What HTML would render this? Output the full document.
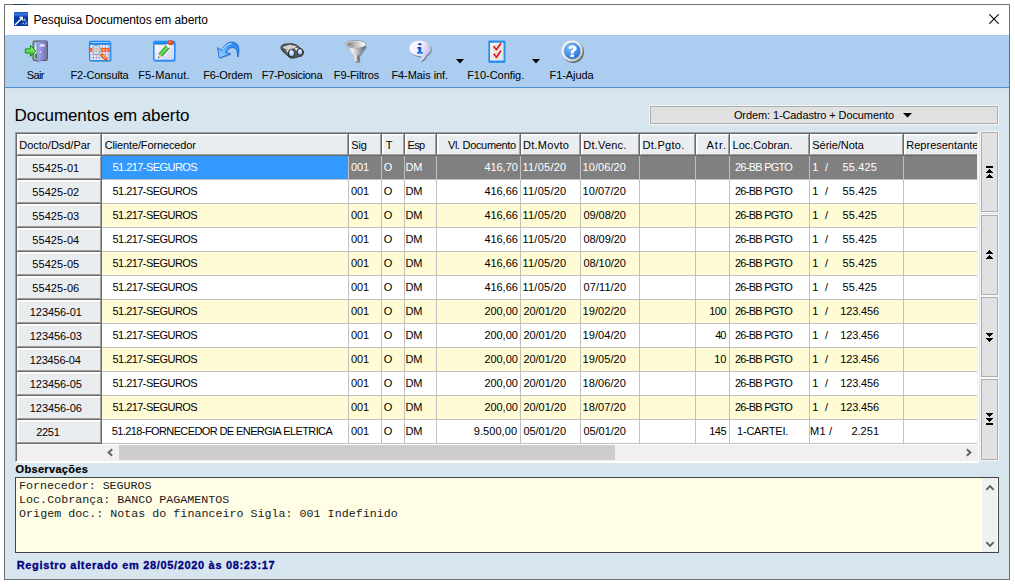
<!DOCTYPE html>
<html><head><meta charset="utf-8"><style>
html,body{margin:0;padding:0;background:#fff;width:1015px;height:585px;overflow:hidden;}
body div{position:absolute;box-sizing:border-box;white-space:pre;}
</style></head><body>
<div style="left:4px;top:4px;width:1006px;height:576px;border:1px solid #6f6f6f;background:#d6e5ee;"></div>
<div style="left:13px;top:4px;width:15px;height:1px;background:#1f3f6f;"></div>
<div style="left:5px;top:5px;width:1004px;height:30px;background:#fff;"></div>
<svg style="position:absolute;left:14px;top:12px" width="14" height="14" viewBox="0 0 14 14">
<defs><linearGradient id="gti" x1="0" y1="0" x2="0" y2="1"><stop offset="0" stop-color="#1a58c8"/><stop offset="0.2" stop-color="#3a78e0"/><stop offset="0.35" stop-color="#0a3aa8"/><stop offset="1" stop-color="#0838a0"/></linearGradient></defs>
<rect x="0" y="0" width="14" height="14" fill="url(#gti)"/>
<path d="M1 13 L7.5 6.5" stroke="#fff" stroke-width="1.5"/><path d="M4.8 4.8 L9 4.8 L9 9 Z" fill="#fff"/>
<path d="M9.5 9 L11 6.5 M8.5 12 L10 11 M11 12.5 L13 10.5 M10.5 8.5 l1.5 0.5" stroke="#9ec0f0" stroke-width="1.1"/>
</svg>
<div style="left:33.40px;top:10px;font:normal 12px 'Liberation Sans', sans-serif;line-height:20px;color:#000;letter-spacing:-0.100px;">Pesquisa Documentos em aberto</div>
<svg style="position:absolute;left:989px;top:14px" width="10" height="10" viewBox="0 0 10 10">
<path d="M0.3 0.3 L9.7 9.7 M9.7 0.3 L0.3 9.7" stroke="#000" stroke-width="1.05"/></svg>
<div style="left:5px;top:35px;width:1004px;height:52px;background:#abcdf0;"></div>
<div style="left:5px;top:35px;width:1004px;height:1px;background:#a5c7ec;"></div>
<div style="left:5px;top:87px;width:1004px;height:1px;background:#4f8fd0;"></div>
<div style="left:5px;top:88px;width:1004px;height:1px;background:#cfe1ee;"></div>
<div style="left:26.70px;top:65px;font:normal 11px 'Liberation Sans', sans-serif;line-height:20px;color:#000;letter-spacing:-0.633px;">Sair</div>
<div style="left:70.40px;top:65px;font:normal 11px 'Liberation Sans', sans-serif;line-height:20px;color:#000;letter-spacing:-0.160px;">F2-Consulta</div>
<div style="left:138.20px;top:65px;font:normal 11px 'Liberation Sans', sans-serif;line-height:20px;color:#000;letter-spacing:0.150px;">F5-Manut.</div>
<div style="left:203.20px;top:65px;font:normal 11px 'Liberation Sans', sans-serif;line-height:20px;color:#000;letter-spacing:-0.143px;">F6-Ordem</div>
<div style="left:261.80px;top:65px;font:normal 11px 'Liberation Sans', sans-serif;line-height:20px;color:#000;letter-spacing:-0.318px;">F7-Posiciona</div>
<div style="left:333.80px;top:65px;font:normal 11px 'Liberation Sans', sans-serif;line-height:20px;color:#000;letter-spacing:-0.100px;">F9-Filtros</div>
<div style="left:391.40px;top:65px;font:normal 11px 'Liberation Sans', sans-serif;line-height:20px;color:#000;letter-spacing:-0.064px;">F4-Mais inf.</div>
<div style="left:467.20px;top:65px;font:normal 11px 'Liberation Sans', sans-serif;line-height:20px;color:#000;letter-spacing:-0.040px;">F10-Config.</div>
<div style="left:549.50px;top:65px;font:normal 11px 'Liberation Sans', sans-serif;line-height:20px;color:#000;letter-spacing:-0.071px;">F1-Ajuda</div>
<svg style="position:absolute;left:456px;top:59px" width="8" height="5" viewBox="0 0 8 5"><path d="M0 0 L8 0 L4 4.5Z" fill="#000"/></svg>
<svg style="position:absolute;left:532px;top:59px" width="8" height="5" viewBox="0 0 8 5"><path d="M0 0 L8 0 L4 4.5Z" fill="#000"/></svg>
<svg style="position:absolute;left:24px;top:38px" width="26" height="26" viewBox="0 0 26 26">
 <defs>
  <linearGradient id="gdoor" x1="0" y1="0" x2="1" y2="0"><stop offset="0" stop-color="#a4a8ec"/><stop offset="1" stop-color="#7478c0"/></linearGradient>
  <linearGradient id="garr" x1="0" y1="0" x2="0" y2="1"><stop offset="0" stop-color="#a8f890"/><stop offset="1" stop-color="#38c028"/></linearGradient>
  <linearGradient id="gopen" x1="0" y1="0" x2="0" y2="1"><stop offset="0" stop-color="#8ad8f8"/><stop offset="0.5" stop-color="#ffffff"/><stop offset="1" stop-color="#c8f0c8"/></linearGradient>
 </defs>
 <rect x="9" y="3" width="14.5" height="19.5" rx="1.2" fill="#8a8a8a" stroke="#5a5a5a" stroke-width="1"/>
 <rect x="10.5" y="4.3" width="3" height="17" fill="url(#gopen)"/>
 <rect x="11" y="15.5" width="2.5" height="5" fill="#18a818"/>
 <path d="M12.9 3.6 L22.2 2.8 L22.2 20.9 L12.9 24 Z" fill="url(#gdoor)" stroke="#6468b0" stroke-width="0.6"/>
 <rect x="15.8" y="6.2" width="4.9" height="2.5" fill="#e4e4ff"/>
 <circle cx="16.4" cy="14.2" r="0.9" fill="#e8e8e8"/>
 <path d="M1.4 10.9 L6.4 10.9 L6.4 7.4 L11.9 12.9 L6.4 18.4 L6.4 15 L1.4 15 Z" fill="url(#garr)" stroke="#109010" stroke-width="1" stroke-linejoin="round"/>
</svg>
<svg style="position:absolute;left:86px;top:38px" width="28" height="26" viewBox="0 0 28 26">
 <rect x="4.2" y="4" width="21.3" height="19.8" rx="1.5" fill="#2a4a70" fill-opacity="0.45"/>
 <rect x="3.6" y="3.4" width="20.6" height="19.2" rx="1.2" fill="#f4f2ff" stroke="#1a8cf8" stroke-width="1.3"/>
 <rect x="4" y="3.8" width="19.8" height="3" fill="#0a78e8"/>
 <rect x="4.5" y="4.2" width="18.8" height="0.9" fill="#c0e4ff"/>
 <rect x="6.8" y="7" width="1" height="15.2" fill="#b0acd0"/>
 <rect x="9.9" y="7" width="1" height="15.2" fill="#b0acd0"/>
 <rect x="12.8" y="7" width="1" height="15.2" fill="#b0acd0"/>
 <rect x="15.899999999999999" y="7" width="1" height="15.2" fill="#b0acd0"/>
 <rect x="18.8" y="7" width="1" height="15.2" fill="#b0acd0"/>
 <rect x="21.7" y="7" width="1" height="15.2" fill="#b0acd0"/>
 <rect x="4" y="9.7" width="19.8" height="1" fill="#b0acd0"/>
 <rect x="4" y="13.1" width="19.8" height="1" fill="#b0acd0"/>
 <rect x="4" y="16.2" width="19.8" height="1" fill="#b0acd0"/>
 <rect x="4" y="19.1" width="19.8" height="1" fill="#b0acd0"/>
 <rect x="4" y="10" width="19.8" height="3.8" fill="#ff5a20"/>
 <rect x="8.05" y="11.1" width="1.6" height="1.6" fill="#ffd0a8"/>
 <rect x="11.05" y="11.1" width="1.6" height="1.6" fill="#ffd0a8"/>
 <rect x="14.05" y="11.1" width="1.6" height="1.6" fill="#ffd0a8"/>
 <rect x="17.05" y="11.1" width="1.6" height="1.6" fill="#ffd0a8"/>
 <rect x="19.95" y="11.1" width="1.6" height="1.6" fill="#ffd0a8"/>
 <circle cx="10.4" cy="12" r="4.6" fill="#bfe6fa" fill-opacity="0.7" stroke="#9a9aa8" stroke-width="1"/>
 <path d="M15.8 17 L19.8 20.8" stroke="#e85010" stroke-width="3.2" stroke-linecap="round"/>
 <path d="M16.1 17 L19.6 20.3" stroke="#ffd040" stroke-width="1.1"/>
</svg>
<svg style="position:absolute;left:152px;top:38px" width="26" height="26" viewBox="0 0 26 26">
 <defs><linearGradient id="gwin" x1="0" y1="0" x2="1" y2="1"><stop offset="0" stop-color="#ffffff"/><stop offset="1" stop-color="#d4d0f4"/></linearGradient></defs>
 <rect x="2.5" y="22.5" width="21" height="1.3" fill="#3a5a7a" fill-opacity="0.35"/>
 <rect x="1.8" y="3.6" width="21" height="19" rx="1.5" fill="url(#gwin)" stroke="#1e90ff" stroke-width="1.6"/>
 <rect x="2.5" y="4.3" width="19.5" height="2.3" fill="#0b7ee8"/>
 <rect x="2.5" y="6.6" width="19.5" height="0.8" fill="#f0c8a0" fill-opacity="0.6"/>
 <path d="M8.2 17.2 L16.2 8.2" stroke="#1a8a1a" stroke-width="4.6"/>
 <path d="M8.2 17.2 L16.2 8.2" stroke="#6ee05a" stroke-width="2.6"/>
 <path d="M15.5 8.8 L17.3 6.8" stroke="#ffffff" stroke-width="4"/>
 <circle cx="18.4" cy="4.6" r="2.7" fill="#e04a20"/>
 <circle cx="18" cy="4" r="1" fill="#ff8a60"/>
 <path d="M6.2 19.5 L7 15.8 L9.5 18.1 Z" fill="#d8c8a8"/>
 <path d="M6 20.3 L6.4 18.6 L7.6 19.6 Z" fill="#303030"/>
</svg>
<svg style="position:absolute;left:214px;top:38px" width="28" height="24" viewBox="0 0 28 24">
 <defs><linearGradient id="gar" x1="0" y1="1" x2="1" y2="0"><stop offset="0" stop-color="#a8d8ff"/><stop offset="0.5" stop-color="#5aaaf8"/><stop offset="1" stop-color="#1a7af0"/></linearGradient></defs>
 <path d="M6.3 21.1 L4.5 10.6 L8.4 13.3 C10 10 14 5.1 19 5.1 C23 5.1 25.5 8 25.5 12 C25.5 15 25.2 18 24.8 20 C24.2 17 24.5 14 23 12 C21.5 10 19 9.8 17 10.5 C15 11.2 13.5 13 12.9 15.6 L17.6 16.8 Z" fill="#1a3a70" fill-opacity="0.35"/>
 <path d="M5.3 20.1 L3.5 9.6 L7.4 12.3 C9 9 13 4.1 18 4.1 C22 4.1 24.5 7 24.5 11 C24.5 14 24.2 17 23.8 19 C23.2 16 23.5 13 22 11 C20.5 9 18 8.8 16 9.5 C14 10.2 12.5 12 11.9 14.6 L16.6 15.8 Z" fill="url(#gar)" stroke="#1468d8" stroke-width="0.9" stroke-linejoin="round"/>
 <path d="M8.5 11.5 C10.5 8.5 13.5 5.8 17.5 5.5" stroke="#d8f0ff" stroke-width="1" fill="none"/>
</svg>
<svg style="position:absolute;left:278px;top:40px" width="28" height="22" viewBox="0 0 28 22">
 <defs><radialGradient id="glens" cx="0.45" cy="0.35" r="0.7"><stop offset="0" stop-color="#f4fbff"/><stop offset="1" stop-color="#6aaaf0"/></radialGradient>
 <linearGradient id="gbar" x1="0" y1="0" x2="0" y2="1"><stop offset="0" stop-color="#ffffff"/><stop offset="1" stop-color="#909090"/></linearGradient></defs>
 <path d="M3 7.5 C3 5 6 4 9 4 L13 3.8 C16 3.8 19 5 21 7 L25.5 11 C25.8 14 24.5 16.5 21.5 16.5 L16 18 C14 18.5 12 18 11 17 L4 10.5 C3.2 9.5 3 8.5 3 7.5 Z" fill="#5a5a5a" stroke="#2a2a2a" stroke-width="0.9"/>
 <path d="M4.5 7 L11.5 4.8 L19 6.3 L16.5 8.3 L8 9.5 Z" fill="#d4d4d4"/>
 <path d="M8 10 L13.5 8.8 L16.5 12 L11.5 16 Z" fill="url(#gbar)"/>
 <path d="M16.5 8.2 L21 7.8 L23.5 10 L19.5 13 Z" fill="url(#gbar)"/>
 <ellipse cx="13.4" cy="13.2" rx="3.4" ry="4" fill="#262626"/>
 <ellipse cx="13.6" cy="13.2" rx="2.5" ry="3.1" fill="url(#glens)"/>
 <ellipse cx="21.8" cy="11.8" rx="3.1" ry="3.7" fill="#262626"/>
 <ellipse cx="22" cy="11.8" rx="2.3" ry="2.9" fill="url(#glens)"/>
</svg>
<svg style="position:absolute;left:342px;top:36px" width="30" height="30" viewBox="0 0 30 30">
 <defs><linearGradient id="gcone" x1="0" y1="0" x2="1" y2="0"><stop offset="0" stop-color="#b8b8b8"/><stop offset="0.3" stop-color="#f4f4f4"/><stop offset="0.7" stop-color="#a0a0a0"/><stop offset="1" stop-color="#505050"/></linearGradient>
 <linearGradient id="gint" x1="0" y1="0" x2="1" y2="0"><stop offset="0" stop-color="#7a7a7a"/><stop offset="0.55" stop-color="#c8c8c8"/><stop offset="1" stop-color="#ffffff"/></linearGradient></defs>
 <path d="M5.3 10.4 L13.2 20.7 L13 26.8 L18.1 26.8 L18.1 20.7 L25.3 11 Z" fill="#3a4a5a" fill-opacity="0.45"/>
 <path d="M4.1 9.2 L12 19.5 L16.9 19.5 L24.1 9.8 Z" fill="url(#gcone)"/>
 <rect x="11.8" y="18.8" width="5.1" height="6.8" rx="1.2" fill="url(#gcone)"/>
 <ellipse cx="13.7" cy="8.2" rx="10.4" ry="3.8" fill="#ececec" stroke="#7a7a7a" stroke-width="0.6"/>
 <ellipse cx="14" cy="8.3" rx="9.2" ry="3" fill="url(#gint)"/>
</svg>
<svg style="position:absolute;left:406px;top:38px" width="28" height="26" viewBox="0 0 28 26">
 <defs><linearGradient id="gbub" x1="0" y1="0" x2="1" y2="0.3"><stop offset="0" stop-color="#ffffff"/><stop offset="0.6" stop-color="#f0eeff"/><stop offset="1" stop-color="#c8c4f0"/></linearGradient>
 <linearGradient id="gi" x1="0" y1="0" x2="0" y2="1"><stop offset="0" stop-color="#0a48b8"/><stop offset="1" stop-color="#1a8af8"/></linearGradient></defs>
 <path d="M14.7 3.6 C21.2 3.6 25.7 7.2 25.7 11.7 C25.7 14.7 23.7 17.2 21.2 18.2 C20.7 20.7 18.2 23.2 14.5 24.7 C16.2 22.7 17 20.7 16.7 19.2 C9.2 19.2 4.5 16 4.5 11.4 C4.5 7 8.7 3.6 14.7 3.6 Z" fill="#3a4058" fill-opacity="0.55"/>
 <path d="M13.5 2.4 C20 2.4 24.5 6 24.5 10.5 C24.5 13.5 22.5 16 20 17 C19.5 19.5 17 22 13.3 23.5 C15 21.5 15.8 19.5 15.5 18 C8 18 3.3 14.8 3.3 10.2 C3.3 5.8 7.5 2.4 13.5 2.4 Z" fill="url(#gbub)" stroke="#d0cce8" stroke-width="0.6"/>
 <ellipse cx="13.9" cy="6.3" rx="1.9" ry="1" fill="#0a40a8"/>
 <path d="M11.3 8.9 L15.3 8.9 L15.3 14 L16.9 14 L16.9 15.8 L10.9 15.8 L10.9 14 L12.4 14 L12.4 10.6 L11.3 10.6 Z" fill="url(#gi)"/>
</svg>
<svg style="position:absolute;left:484px;top:38px" width="26" height="28" viewBox="0 0 26 28">
 <defs><linearGradient id="gpap" x1="0" y1="0" x2="1" y2="0"><stop offset="0" stop-color="#e8e4dc"/><stop offset="0.3" stop-color="#ffffff"/><stop offset="1" stop-color="#e4e0d8"/></linearGradient></defs>
 <rect x="4.9" y="3" width="16.5" height="22" rx="1.2" fill="#0a64c8" fill-opacity="0.5"/>
 <rect x="4.3" y="2.4" width="16.9" height="22.4" rx="1.2" fill="#2a90ec"/>
 <rect x="6" y="4.8" width="13.6" height="17.7" fill="url(#gpap)"/>
 <rect x="9.2" y="7.4" width="5.8" height="5.4" rx="1.6" fill="none" stroke="#c4c4c4" stroke-width="0.9"/>
 <rect x="9.2" y="15.2" width="5.8" height="5.4" rx="1.6" fill="none" stroke="#c4c4c4" stroke-width="0.9"/>
 <path d="M9.6 8.2 L12.4 11.6 L16.9 5.2" fill="none" stroke="#e01818" stroke-width="1.7" stroke-linejoin="round"/>
 <path d="M9.8 15.8 L12.4 19.2 L16.9 12.8" fill="none" stroke="#e01818" stroke-width="1.7" stroke-linejoin="round"/>
</svg>
<svg style="position:absolute;left:558px;top:38px" width="28" height="27" viewBox="0 0 28 27">
 <defs><radialGradient id="ghelp" cx="0.35" cy="0.3" r="0.8"><stop offset="0" stop-color="#7cc0ff"/><stop offset="1" stop-color="#1a6ad8"/></radialGradient>
 <linearGradient id="gring" x1="0" y1="0" x2="1" y2="1"><stop offset="0" stop-color="#ffffff"/><stop offset="0.6" stop-color="#f0ece4"/><stop offset="1" stop-color="#b0a898"/></linearGradient></defs>
 <circle cx="15.2" cy="14.1" r="10.8" fill="#2a2a2a" fill-opacity="0.6"/>
 <circle cx="14.2" cy="13" r="10.6" fill="url(#gring)"/>
 <circle cx="14.2" cy="13" r="8.4" fill="url(#ghelp)" stroke="#c8c0b0" stroke-width="0.5"/>
 <path d="M10.4 10.6 C10.4 8.4 12.2 7.3 14.6 7.3 C17 7.3 18.7 8.6 18.7 10.5 C18.7 12.5 16.5 13 15.8 14.3 L15.8 15.6 L12.8 15.6 L12.8 14 C12.8 11.9 15.4 11.6 15.4 10.5 C15.4 9.9 15 9.6 14.5 9.6 C13.9 9.6 13.6 10.1 13.6 10.9 Z" fill="#fff"/>
 <rect x="12.4" y="16.6" width="3.6" height="2.5" fill="#fff"/>
</svg>

<div style="left:14.60px;top:106px;font:normal 17px 'Liberation Sans', sans-serif;line-height:20px;color:#000;letter-spacing:-0.095px;">Documentos em aberto</div>
<div style="left:649px;top:105px;width:350px;height:20px;background:#f3f6f8;"></div>
<div style="left:650px;top:106px;width:348px;height:18px;border:1px solid #adadad;background:#e1e1e1;"></div>
<div style="left:733.90px;top:105px;font:normal 11px 'Liberation Sans', sans-serif;line-height:20px;color:#000;letter-spacing:-0.100px;">Ordem: 1-Cadastro + Documento</div>
<svg style="position:absolute;left:903px;top:113px" width="9" height="5" viewBox="0 0 9 5"><path d="M0 0 L9 0 L4.5 4.5Z" fill="#000"/></svg>
<div style="left:15px;top:132px;width:964px;height:331px;background:#fff;"></div>
<div style="left:15px;top:132px;width:964px;height:1px;background:#a0a0a0;"></div>
<div style="left:15px;top:132px;width:1px;height:331px;background:#a0a0a0;"></div>
<div style="left:16px;top:133px;width:962px;height:1px;background:#696969;"></div>
<div style="left:16px;top:133px;width:1px;height:329px;background:#696969;"></div>
<div style="left:15px;top:462px;width:964px;height:1px;background:#fff;"></div>
<div style="left:978px;top:132px;width:1px;height:331px;background:#fff;"></div>
<div style="left:16px;top:461px;width:962px;height:1px;background:#fcfcfc;"></div>
<div style="left:977px;top:133px;width:1px;height:329px;background:#f0f0f0;"></div>
<div style="left:17px;top:134px;width:960px;height:310px;overflow:hidden;">
<div style="left:0px;top:0px;width:84px;height:21px;background:#eaedf0;border-top:1px solid #fff;border-left:1px solid #fff;border-bottom:1px solid #a0a0a0;border-right:1px solid #a0a0a0;box-shadow:inset 1px 1px #f6f7f8;"></div>
<div style="left:84px;top:0px;width:1px;height:22px;background:#696969;"></div>
<div style="left:85px;top:0px;width:246px;height:21px;background:#eaedf0;border-top:1px solid #fff;border-left:1px solid #fff;border-bottom:1px solid #a0a0a0;border-right:1px solid #a0a0a0;box-shadow:inset 1px 1px #f6f7f8;"></div>
<div style="left:331px;top:0px;width:1px;height:22px;background:#696969;"></div>
<div style="left:332px;top:0px;width:32px;height:21px;background:#eaedf0;border-top:1px solid #fff;border-left:1px solid #fff;border-bottom:1px solid #a0a0a0;border-right:1px solid #a0a0a0;box-shadow:inset 1px 1px #f6f7f8;"></div>
<div style="left:364px;top:0px;width:1px;height:22px;background:#696969;"></div>
<div style="left:365px;top:0px;width:22px;height:21px;background:#eaedf0;border-top:1px solid #fff;border-left:1px solid #fff;border-bottom:1px solid #a0a0a0;border-right:1px solid #a0a0a0;box-shadow:inset 1px 1px #f6f7f8;"></div>
<div style="left:387px;top:0px;width:1px;height:22px;background:#696969;"></div>
<div style="left:388px;top:0px;width:31px;height:21px;background:#eaedf0;border-top:1px solid #fff;border-left:1px solid #fff;border-bottom:1px solid #a0a0a0;border-right:1px solid #a0a0a0;box-shadow:inset 1px 1px #f6f7f8;"></div>
<div style="left:419px;top:0px;width:1px;height:22px;background:#696969;"></div>
<div style="left:420px;top:0px;width:83px;height:21px;background:#eaedf0;border-top:1px solid #fff;border-left:1px solid #fff;border-bottom:1px solid #a0a0a0;border-right:1px solid #a0a0a0;box-shadow:inset 1px 1px #f6f7f8;"></div>
<div style="left:503px;top:0px;width:1px;height:22px;background:#696969;"></div>
<div style="left:504px;top:0px;width:59px;height:21px;background:#eaedf0;border-top:1px solid #fff;border-left:1px solid #fff;border-bottom:1px solid #a0a0a0;border-right:1px solid #a0a0a0;box-shadow:inset 1px 1px #f6f7f8;"></div>
<div style="left:563px;top:0px;width:1px;height:22px;background:#696969;"></div>
<div style="left:564px;top:0px;width:58px;height:21px;background:#eaedf0;border-top:1px solid #fff;border-left:1px solid #fff;border-bottom:1px solid #a0a0a0;border-right:1px solid #a0a0a0;box-shadow:inset 1px 1px #f6f7f8;"></div>
<div style="left:622px;top:0px;width:1px;height:22px;background:#696969;"></div>
<div style="left:623px;top:0px;width:55px;height:21px;background:#eaedf0;border-top:1px solid #fff;border-left:1px solid #fff;border-bottom:1px solid #a0a0a0;border-right:1px solid #a0a0a0;box-shadow:inset 1px 1px #f6f7f8;"></div>
<div style="left:678px;top:0px;width:1px;height:22px;background:#696969;"></div>
<div style="left:679px;top:0px;width:33px;height:21px;background:#eaedf0;border-top:1px solid #fff;border-left:1px solid #fff;border-bottom:1px solid #a0a0a0;border-right:1px solid #a0a0a0;box-shadow:inset 1px 1px #f6f7f8;"></div>
<div style="left:712px;top:0px;width:1px;height:22px;background:#696969;"></div>
<div style="left:713px;top:0px;width:79px;height:21px;background:#eaedf0;border-top:1px solid #fff;border-left:1px solid #fff;border-bottom:1px solid #a0a0a0;border-right:1px solid #a0a0a0;box-shadow:inset 1px 1px #f6f7f8;"></div>
<div style="left:792px;top:0px;width:1px;height:22px;background:#696969;"></div>
<div style="left:793px;top:0px;width:93px;height:21px;background:#eaedf0;border-top:1px solid #fff;border-left:1px solid #fff;border-bottom:1px solid #a0a0a0;border-right:1px solid #a0a0a0;box-shadow:inset 1px 1px #f6f7f8;"></div>
<div style="left:886px;top:0px;width:1px;height:22px;background:#696969;"></div>
<div style="left:887px;top:0px;width:196px;height:21px;background:#eaedf0;border-top:1px solid #fff;border-left:1px solid #fff;border-bottom:1px solid #a0a0a0;border-right:1px solid #a0a0a0;box-shadow:inset 1px 1px #f6f7f8;"></div>
<div style="left:1083px;top:0px;width:1px;height:22px;background:#696969;"></div>
<div style="left:0px;top:21px;width:1183px;height:1px;background:#696969;"></div>
<div style="left:0px;top:22px;width:84px;height:23px;background:#eaedf0;border-top:1px solid #fff;border-left:1px solid #fff;border-bottom:1px solid #a0a0a0;border-right:1px solid #a0a0a0;box-shadow:inset 1px 1px #f6f7f8;"></div>
<div style="left:84px;top:22px;width:1px;height:24px;background:#696969;"></div>
<div style="left:0px;top:45px;width:85px;height:1px;background:#696969;"></div>
<div style="left:85px;top:22px;width:1098px;height:23px;background:#808080;"></div>
<div style="left:85px;top:22px;width:246px;height:23px;background:#3399ff;"></div>
<div style="left:85px;top:45px;width:1098px;height:1px;background:#c0c0c0;"></div>
<div style="left:331px;top:22px;width:1px;height:24px;background:#c0c0c0;"></div>
<div style="left:364px;top:22px;width:1px;height:24px;background:#c0c0c0;"></div>
<div style="left:387px;top:22px;width:1px;height:24px;background:#c0c0c0;"></div>
<div style="left:419px;top:22px;width:1px;height:24px;background:#c0c0c0;"></div>
<div style="left:503px;top:22px;width:1px;height:24px;background:#c0c0c0;"></div>
<div style="left:563px;top:22px;width:1px;height:24px;background:#c0c0c0;"></div>
<div style="left:622px;top:22px;width:1px;height:24px;background:#c0c0c0;"></div>
<div style="left:678px;top:22px;width:1px;height:24px;background:#c0c0c0;"></div>
<div style="left:712px;top:22px;width:1px;height:24px;background:#c0c0c0;"></div>
<div style="left:792px;top:22px;width:1px;height:24px;background:#c0c0c0;"></div>
<div style="left:886px;top:22px;width:1px;height:24px;background:#c0c0c0;"></div>
<div style="left:0px;top:46px;width:84px;height:23px;background:#eaedf0;border-top:1px solid #fff;border-left:1px solid #fff;border-bottom:1px solid #a0a0a0;border-right:1px solid #a0a0a0;box-shadow:inset 1px 1px #f6f7f8;"></div>
<div style="left:84px;top:46px;width:1px;height:24px;background:#696969;"></div>
<div style="left:0px;top:69px;width:85px;height:1px;background:#696969;"></div>
<div style="left:85px;top:46px;width:1098px;height:23px;background:#ffffff;"></div>
<div style="left:85px;top:69px;width:1098px;height:1px;background:#c0c0c0;"></div>
<div style="left:331px;top:46px;width:1px;height:24px;background:#c0c0c0;"></div>
<div style="left:364px;top:46px;width:1px;height:24px;background:#c0c0c0;"></div>
<div style="left:387px;top:46px;width:1px;height:24px;background:#c0c0c0;"></div>
<div style="left:419px;top:46px;width:1px;height:24px;background:#c0c0c0;"></div>
<div style="left:503px;top:46px;width:1px;height:24px;background:#c0c0c0;"></div>
<div style="left:563px;top:46px;width:1px;height:24px;background:#c0c0c0;"></div>
<div style="left:622px;top:46px;width:1px;height:24px;background:#c0c0c0;"></div>
<div style="left:678px;top:46px;width:1px;height:24px;background:#c0c0c0;"></div>
<div style="left:712px;top:46px;width:1px;height:24px;background:#c0c0c0;"></div>
<div style="left:792px;top:46px;width:1px;height:24px;background:#c0c0c0;"></div>
<div style="left:886px;top:46px;width:1px;height:24px;background:#c0c0c0;"></div>
<div style="left:0px;top:70px;width:84px;height:23px;background:#eaedf0;border-top:1px solid #fff;border-left:1px solid #fff;border-bottom:1px solid #a0a0a0;border-right:1px solid #a0a0a0;box-shadow:inset 1px 1px #f6f7f8;"></div>
<div style="left:84px;top:70px;width:1px;height:24px;background:#696969;"></div>
<div style="left:0px;top:93px;width:85px;height:1px;background:#696969;"></div>
<div style="left:85px;top:70px;width:1098px;height:23px;background:#fffbd5;"></div>
<div style="left:85px;top:93px;width:1098px;height:1px;background:#c0c0c0;"></div>
<div style="left:331px;top:70px;width:1px;height:24px;background:#c0c0c0;"></div>
<div style="left:364px;top:70px;width:1px;height:24px;background:#c0c0c0;"></div>
<div style="left:387px;top:70px;width:1px;height:24px;background:#c0c0c0;"></div>
<div style="left:419px;top:70px;width:1px;height:24px;background:#c0c0c0;"></div>
<div style="left:503px;top:70px;width:1px;height:24px;background:#c0c0c0;"></div>
<div style="left:563px;top:70px;width:1px;height:24px;background:#c0c0c0;"></div>
<div style="left:622px;top:70px;width:1px;height:24px;background:#c0c0c0;"></div>
<div style="left:678px;top:70px;width:1px;height:24px;background:#c0c0c0;"></div>
<div style="left:712px;top:70px;width:1px;height:24px;background:#c0c0c0;"></div>
<div style="left:792px;top:70px;width:1px;height:24px;background:#c0c0c0;"></div>
<div style="left:886px;top:70px;width:1px;height:24px;background:#c0c0c0;"></div>
<div style="left:0px;top:94px;width:84px;height:23px;background:#eaedf0;border-top:1px solid #fff;border-left:1px solid #fff;border-bottom:1px solid #a0a0a0;border-right:1px solid #a0a0a0;box-shadow:inset 1px 1px #f6f7f8;"></div>
<div style="left:84px;top:94px;width:1px;height:24px;background:#696969;"></div>
<div style="left:0px;top:117px;width:85px;height:1px;background:#696969;"></div>
<div style="left:85px;top:94px;width:1098px;height:23px;background:#ffffff;"></div>
<div style="left:85px;top:117px;width:1098px;height:1px;background:#c0c0c0;"></div>
<div style="left:331px;top:94px;width:1px;height:24px;background:#c0c0c0;"></div>
<div style="left:364px;top:94px;width:1px;height:24px;background:#c0c0c0;"></div>
<div style="left:387px;top:94px;width:1px;height:24px;background:#c0c0c0;"></div>
<div style="left:419px;top:94px;width:1px;height:24px;background:#c0c0c0;"></div>
<div style="left:503px;top:94px;width:1px;height:24px;background:#c0c0c0;"></div>
<div style="left:563px;top:94px;width:1px;height:24px;background:#c0c0c0;"></div>
<div style="left:622px;top:94px;width:1px;height:24px;background:#c0c0c0;"></div>
<div style="left:678px;top:94px;width:1px;height:24px;background:#c0c0c0;"></div>
<div style="left:712px;top:94px;width:1px;height:24px;background:#c0c0c0;"></div>
<div style="left:792px;top:94px;width:1px;height:24px;background:#c0c0c0;"></div>
<div style="left:886px;top:94px;width:1px;height:24px;background:#c0c0c0;"></div>
<div style="left:0px;top:118px;width:84px;height:23px;background:#eaedf0;border-top:1px solid #fff;border-left:1px solid #fff;border-bottom:1px solid #a0a0a0;border-right:1px solid #a0a0a0;box-shadow:inset 1px 1px #f6f7f8;"></div>
<div style="left:84px;top:118px;width:1px;height:24px;background:#696969;"></div>
<div style="left:0px;top:141px;width:85px;height:1px;background:#696969;"></div>
<div style="left:85px;top:118px;width:1098px;height:23px;background:#fffbd5;"></div>
<div style="left:85px;top:141px;width:1098px;height:1px;background:#c0c0c0;"></div>
<div style="left:331px;top:118px;width:1px;height:24px;background:#c0c0c0;"></div>
<div style="left:364px;top:118px;width:1px;height:24px;background:#c0c0c0;"></div>
<div style="left:387px;top:118px;width:1px;height:24px;background:#c0c0c0;"></div>
<div style="left:419px;top:118px;width:1px;height:24px;background:#c0c0c0;"></div>
<div style="left:503px;top:118px;width:1px;height:24px;background:#c0c0c0;"></div>
<div style="left:563px;top:118px;width:1px;height:24px;background:#c0c0c0;"></div>
<div style="left:622px;top:118px;width:1px;height:24px;background:#c0c0c0;"></div>
<div style="left:678px;top:118px;width:1px;height:24px;background:#c0c0c0;"></div>
<div style="left:712px;top:118px;width:1px;height:24px;background:#c0c0c0;"></div>
<div style="left:792px;top:118px;width:1px;height:24px;background:#c0c0c0;"></div>
<div style="left:886px;top:118px;width:1px;height:24px;background:#c0c0c0;"></div>
<div style="left:0px;top:142px;width:84px;height:23px;background:#eaedf0;border-top:1px solid #fff;border-left:1px solid #fff;border-bottom:1px solid #a0a0a0;border-right:1px solid #a0a0a0;box-shadow:inset 1px 1px #f6f7f8;"></div>
<div style="left:84px;top:142px;width:1px;height:24px;background:#696969;"></div>
<div style="left:0px;top:165px;width:85px;height:1px;background:#696969;"></div>
<div style="left:85px;top:142px;width:1098px;height:23px;background:#ffffff;"></div>
<div style="left:85px;top:165px;width:1098px;height:1px;background:#c0c0c0;"></div>
<div style="left:331px;top:142px;width:1px;height:24px;background:#c0c0c0;"></div>
<div style="left:364px;top:142px;width:1px;height:24px;background:#c0c0c0;"></div>
<div style="left:387px;top:142px;width:1px;height:24px;background:#c0c0c0;"></div>
<div style="left:419px;top:142px;width:1px;height:24px;background:#c0c0c0;"></div>
<div style="left:503px;top:142px;width:1px;height:24px;background:#c0c0c0;"></div>
<div style="left:563px;top:142px;width:1px;height:24px;background:#c0c0c0;"></div>
<div style="left:622px;top:142px;width:1px;height:24px;background:#c0c0c0;"></div>
<div style="left:678px;top:142px;width:1px;height:24px;background:#c0c0c0;"></div>
<div style="left:712px;top:142px;width:1px;height:24px;background:#c0c0c0;"></div>
<div style="left:792px;top:142px;width:1px;height:24px;background:#c0c0c0;"></div>
<div style="left:886px;top:142px;width:1px;height:24px;background:#c0c0c0;"></div>
<div style="left:0px;top:166px;width:84px;height:23px;background:#eaedf0;border-top:1px solid #fff;border-left:1px solid #fff;border-bottom:1px solid #a0a0a0;border-right:1px solid #a0a0a0;box-shadow:inset 1px 1px #f6f7f8;"></div>
<div style="left:84px;top:166px;width:1px;height:24px;background:#696969;"></div>
<div style="left:0px;top:189px;width:85px;height:1px;background:#696969;"></div>
<div style="left:85px;top:166px;width:1098px;height:23px;background:#fffbd5;"></div>
<div style="left:85px;top:189px;width:1098px;height:1px;background:#c0c0c0;"></div>
<div style="left:331px;top:166px;width:1px;height:24px;background:#c0c0c0;"></div>
<div style="left:364px;top:166px;width:1px;height:24px;background:#c0c0c0;"></div>
<div style="left:387px;top:166px;width:1px;height:24px;background:#c0c0c0;"></div>
<div style="left:419px;top:166px;width:1px;height:24px;background:#c0c0c0;"></div>
<div style="left:503px;top:166px;width:1px;height:24px;background:#c0c0c0;"></div>
<div style="left:563px;top:166px;width:1px;height:24px;background:#c0c0c0;"></div>
<div style="left:622px;top:166px;width:1px;height:24px;background:#c0c0c0;"></div>
<div style="left:678px;top:166px;width:1px;height:24px;background:#c0c0c0;"></div>
<div style="left:712px;top:166px;width:1px;height:24px;background:#c0c0c0;"></div>
<div style="left:792px;top:166px;width:1px;height:24px;background:#c0c0c0;"></div>
<div style="left:886px;top:166px;width:1px;height:24px;background:#c0c0c0;"></div>
<div style="left:0px;top:190px;width:84px;height:23px;background:#eaedf0;border-top:1px solid #fff;border-left:1px solid #fff;border-bottom:1px solid #a0a0a0;border-right:1px solid #a0a0a0;box-shadow:inset 1px 1px #f6f7f8;"></div>
<div style="left:84px;top:190px;width:1px;height:24px;background:#696969;"></div>
<div style="left:0px;top:213px;width:85px;height:1px;background:#696969;"></div>
<div style="left:85px;top:190px;width:1098px;height:23px;background:#ffffff;"></div>
<div style="left:85px;top:213px;width:1098px;height:1px;background:#c0c0c0;"></div>
<div style="left:331px;top:190px;width:1px;height:24px;background:#c0c0c0;"></div>
<div style="left:364px;top:190px;width:1px;height:24px;background:#c0c0c0;"></div>
<div style="left:387px;top:190px;width:1px;height:24px;background:#c0c0c0;"></div>
<div style="left:419px;top:190px;width:1px;height:24px;background:#c0c0c0;"></div>
<div style="left:503px;top:190px;width:1px;height:24px;background:#c0c0c0;"></div>
<div style="left:563px;top:190px;width:1px;height:24px;background:#c0c0c0;"></div>
<div style="left:622px;top:190px;width:1px;height:24px;background:#c0c0c0;"></div>
<div style="left:678px;top:190px;width:1px;height:24px;background:#c0c0c0;"></div>
<div style="left:712px;top:190px;width:1px;height:24px;background:#c0c0c0;"></div>
<div style="left:792px;top:190px;width:1px;height:24px;background:#c0c0c0;"></div>
<div style="left:886px;top:190px;width:1px;height:24px;background:#c0c0c0;"></div>
<div style="left:0px;top:214px;width:84px;height:23px;background:#eaedf0;border-top:1px solid #fff;border-left:1px solid #fff;border-bottom:1px solid #a0a0a0;border-right:1px solid #a0a0a0;box-shadow:inset 1px 1px #f6f7f8;"></div>
<div style="left:84px;top:214px;width:1px;height:24px;background:#696969;"></div>
<div style="left:0px;top:237px;width:85px;height:1px;background:#696969;"></div>
<div style="left:85px;top:214px;width:1098px;height:23px;background:#fffbd5;"></div>
<div style="left:85px;top:237px;width:1098px;height:1px;background:#c0c0c0;"></div>
<div style="left:331px;top:214px;width:1px;height:24px;background:#c0c0c0;"></div>
<div style="left:364px;top:214px;width:1px;height:24px;background:#c0c0c0;"></div>
<div style="left:387px;top:214px;width:1px;height:24px;background:#c0c0c0;"></div>
<div style="left:419px;top:214px;width:1px;height:24px;background:#c0c0c0;"></div>
<div style="left:503px;top:214px;width:1px;height:24px;background:#c0c0c0;"></div>
<div style="left:563px;top:214px;width:1px;height:24px;background:#c0c0c0;"></div>
<div style="left:622px;top:214px;width:1px;height:24px;background:#c0c0c0;"></div>
<div style="left:678px;top:214px;width:1px;height:24px;background:#c0c0c0;"></div>
<div style="left:712px;top:214px;width:1px;height:24px;background:#c0c0c0;"></div>
<div style="left:792px;top:214px;width:1px;height:24px;background:#c0c0c0;"></div>
<div style="left:886px;top:214px;width:1px;height:24px;background:#c0c0c0;"></div>
<div style="left:0px;top:238px;width:84px;height:23px;background:#eaedf0;border-top:1px solid #fff;border-left:1px solid #fff;border-bottom:1px solid #a0a0a0;border-right:1px solid #a0a0a0;box-shadow:inset 1px 1px #f6f7f8;"></div>
<div style="left:84px;top:238px;width:1px;height:24px;background:#696969;"></div>
<div style="left:0px;top:261px;width:85px;height:1px;background:#696969;"></div>
<div style="left:85px;top:238px;width:1098px;height:23px;background:#ffffff;"></div>
<div style="left:85px;top:261px;width:1098px;height:1px;background:#c0c0c0;"></div>
<div style="left:331px;top:238px;width:1px;height:24px;background:#c0c0c0;"></div>
<div style="left:364px;top:238px;width:1px;height:24px;background:#c0c0c0;"></div>
<div style="left:387px;top:238px;width:1px;height:24px;background:#c0c0c0;"></div>
<div style="left:419px;top:238px;width:1px;height:24px;background:#c0c0c0;"></div>
<div style="left:503px;top:238px;width:1px;height:24px;background:#c0c0c0;"></div>
<div style="left:563px;top:238px;width:1px;height:24px;background:#c0c0c0;"></div>
<div style="left:622px;top:238px;width:1px;height:24px;background:#c0c0c0;"></div>
<div style="left:678px;top:238px;width:1px;height:24px;background:#c0c0c0;"></div>
<div style="left:712px;top:238px;width:1px;height:24px;background:#c0c0c0;"></div>
<div style="left:792px;top:238px;width:1px;height:24px;background:#c0c0c0;"></div>
<div style="left:886px;top:238px;width:1px;height:24px;background:#c0c0c0;"></div>
<div style="left:0px;top:262px;width:84px;height:23px;background:#eaedf0;border-top:1px solid #fff;border-left:1px solid #fff;border-bottom:1px solid #a0a0a0;border-right:1px solid #a0a0a0;box-shadow:inset 1px 1px #f6f7f8;"></div>
<div style="left:84px;top:262px;width:1px;height:24px;background:#696969;"></div>
<div style="left:0px;top:285px;width:85px;height:1px;background:#696969;"></div>
<div style="left:85px;top:262px;width:1098px;height:23px;background:#fffbd5;"></div>
<div style="left:85px;top:285px;width:1098px;height:1px;background:#c0c0c0;"></div>
<div style="left:331px;top:262px;width:1px;height:24px;background:#c0c0c0;"></div>
<div style="left:364px;top:262px;width:1px;height:24px;background:#c0c0c0;"></div>
<div style="left:387px;top:262px;width:1px;height:24px;background:#c0c0c0;"></div>
<div style="left:419px;top:262px;width:1px;height:24px;background:#c0c0c0;"></div>
<div style="left:503px;top:262px;width:1px;height:24px;background:#c0c0c0;"></div>
<div style="left:563px;top:262px;width:1px;height:24px;background:#c0c0c0;"></div>
<div style="left:622px;top:262px;width:1px;height:24px;background:#c0c0c0;"></div>
<div style="left:678px;top:262px;width:1px;height:24px;background:#c0c0c0;"></div>
<div style="left:712px;top:262px;width:1px;height:24px;background:#c0c0c0;"></div>
<div style="left:792px;top:262px;width:1px;height:24px;background:#c0c0c0;"></div>
<div style="left:886px;top:262px;width:1px;height:24px;background:#c0c0c0;"></div>
<div style="left:0px;top:286px;width:84px;height:23px;background:#eaedf0;border-top:1px solid #fff;border-left:1px solid #fff;border-bottom:1px solid #a0a0a0;border-right:1px solid #a0a0a0;box-shadow:inset 1px 1px #f6f7f8;"></div>
<div style="left:84px;top:286px;width:1px;height:24px;background:#696969;"></div>
<div style="left:0px;top:309px;width:85px;height:1px;background:#696969;"></div>
<div style="left:85px;top:286px;width:1098px;height:23px;background:#ffffff;"></div>
<div style="left:85px;top:309px;width:1098px;height:1px;background:#c0c0c0;"></div>
<div style="left:331px;top:286px;width:1px;height:24px;background:#c0c0c0;"></div>
<div style="left:364px;top:286px;width:1px;height:24px;background:#c0c0c0;"></div>
<div style="left:387px;top:286px;width:1px;height:24px;background:#c0c0c0;"></div>
<div style="left:419px;top:286px;width:1px;height:24px;background:#c0c0c0;"></div>
<div style="left:503px;top:286px;width:1px;height:24px;background:#c0c0c0;"></div>
<div style="left:563px;top:286px;width:1px;height:24px;background:#c0c0c0;"></div>
<div style="left:622px;top:286px;width:1px;height:24px;background:#c0c0c0;"></div>
<div style="left:678px;top:286px;width:1px;height:24px;background:#c0c0c0;"></div>
<div style="left:712px;top:286px;width:1px;height:24px;background:#c0c0c0;"></div>
<div style="left:792px;top:286px;width:1px;height:24px;background:#c0c0c0;"></div>
<div style="left:886px;top:286px;width:1px;height:24px;background:#c0c0c0;"></div>
<div style="left:2.30px;top:1px;font:normal 11px 'Liberation Sans', sans-serif;line-height:20px;color:#000;letter-spacing:-0.033px;">Docto/Dsd/Par</div>
<div style="left:87.70px;top:1px;font:normal 11px 'Liberation Sans', sans-serif;line-height:20px;color:#000;letter-spacing:-0.141px;">Cliente/Fornecedor</div>
<div style="left:334.20px;top:1px;font:normal 11px 'Liberation Sans', sans-serif;line-height:20px;color:#000;letter-spacing:-0.100px;">Sig</div>
<div style="left:368.70px;top:1px;font:normal 11px 'Liberation Sans', sans-serif;line-height:20px;color:#000;">T</div>
<div style="left:390.60px;top:1px;font:normal 11px 'Liberation Sans', sans-serif;line-height:20px;color:#000;letter-spacing:-0.750px;">Esp</div>
<div style="left:431.00px;top:1px;font:normal 11px 'Liberation Sans', sans-serif;line-height:20px;color:#000;letter-spacing:-0.333px;">Vl. Documento</div>
<div style="left:506.00px;top:1px;font:normal 11px 'Liberation Sans', sans-serif;line-height:20px;color:#000;letter-spacing:0.271px;">Dt.Movto</div>
<div style="left:566.30px;top:1px;font:normal 11px 'Liberation Sans', sans-serif;line-height:20px;color:#000;letter-spacing:0.200px;">Dt.Venc.</div>
<div style="left:625.40px;top:1px;font:normal 11px 'Liberation Sans', sans-serif;line-height:20px;color:#000;letter-spacing:0.314px;">Dt.Pgto.</div>
<div style="left:689.40px;top:1px;font:normal 11px 'Liberation Sans', sans-serif;line-height:20px;color:#000;letter-spacing:1.067px;">Atr.</div>
<div style="left:715.50px;top:1px;font:normal 11px 'Liberation Sans', sans-serif;line-height:20px;color:#000;letter-spacing:0.010px;">Loc.Cobran.</div>
<div style="left:795.30px;top:1px;font:normal 11px 'Liberation Sans', sans-serif;line-height:20px;color:#000;letter-spacing:-0.044px;">Série/Nota</div>
<div style="left:889.30px;top:1px;font:normal 11px 'Liberation Sans', sans-serif;line-height:20px;color:#000;">Representante</div>
<div style="left:15.30px;top:24px;font:normal 11px 'Liberation Sans', sans-serif;line-height:20px;color:#000;letter-spacing:0.057px;">55425-01</div>
<div style="left:95.50px;top:23px;font:normal 11px 'Liberation Sans', sans-serif;line-height:20px;color:#fff;letter-spacing:-0.554px;">51.217-SEGUROS</div>
<div style="left:333.90px;top:23px;font:normal 11px 'Liberation Sans', sans-serif;line-height:20px;color:#fff;letter-spacing:-0.100px;">001</div>
<div style="left:366.70px;top:23px;font:normal 11px 'Liberation Sans', sans-serif;line-height:20px;color:#fff;">O</div>
<div style="left:388.60px;top:23px;font:normal 11px 'Liberation Sans', sans-serif;line-height:20px;color:#fff;letter-spacing:-0.300px;">DM</div>
<div style="left:467.40px;top:23px;font:normal 11px 'Liberation Sans', sans-serif;line-height:20px;color:#fff;letter-spacing:-0.040px;">416,70</div>
<div style="left:505.40px;top:23px;font:normal 11px 'Liberation Sans', sans-serif;line-height:20px;color:#fff;letter-spacing:0.257px;">11/05/20</div>
<div style="left:565.50px;top:23px;font:normal 11px 'Liberation Sans', sans-serif;line-height:20px;color:#fff;letter-spacing:0.071px;">10/06/20</div>
<div style="left:718.00px;top:23px;font:normal 11px 'Liberation Sans', sans-serif;line-height:20px;color:#fff;letter-spacing:-0.744px;">26-BB PGTO</div>
<div style="left:795.30px;top:23px;font:normal 11px 'Liberation Sans', sans-serif;line-height:20px;color:#fff;letter-spacing:1.800px;">1 /</div>
<div style="left:825.40px;top:23px;font:normal 11px 'Liberation Sans', sans-serif;line-height:20px;color:#fff;letter-spacing:0.180px;">55.425</div>
<div style="left:15.30px;top:48px;font:normal 11px 'Liberation Sans', sans-serif;line-height:20px;color:#000;letter-spacing:0.057px;">55425-02</div>
<div style="left:95.50px;top:47px;font:normal 11px 'Liberation Sans', sans-serif;line-height:20px;color:#000;letter-spacing:-0.554px;">51.217-SEGUROS</div>
<div style="left:333.90px;top:47px;font:normal 11px 'Liberation Sans', sans-serif;line-height:20px;color:#000;letter-spacing:-0.100px;">001</div>
<div style="left:366.70px;top:47px;font:normal 11px 'Liberation Sans', sans-serif;line-height:20px;color:#000;">O</div>
<div style="left:388.60px;top:47px;font:normal 11px 'Liberation Sans', sans-serif;line-height:20px;color:#000;letter-spacing:-0.300px;">DM</div>
<div style="left:467.40px;top:47px;font:normal 11px 'Liberation Sans', sans-serif;line-height:20px;color:#000;letter-spacing:-0.040px;">416,66</div>
<div style="left:505.40px;top:47px;font:normal 11px 'Liberation Sans', sans-serif;line-height:20px;color:#000;letter-spacing:0.257px;">11/05/20</div>
<div style="left:565.50px;top:47px;font:normal 11px 'Liberation Sans', sans-serif;line-height:20px;color:#000;letter-spacing:0.071px;">10/07/20</div>
<div style="left:718.00px;top:47px;font:normal 11px 'Liberation Sans', sans-serif;line-height:20px;color:#000;letter-spacing:-0.744px;">26-BB PGTO</div>
<div style="left:795.30px;top:47px;font:normal 11px 'Liberation Sans', sans-serif;line-height:20px;color:#000;letter-spacing:1.800px;">1 /</div>
<div style="left:825.40px;top:47px;font:normal 11px 'Liberation Sans', sans-serif;line-height:20px;color:#000;letter-spacing:0.180px;">55.425</div>
<div style="left:15.30px;top:72px;font:normal 11px 'Liberation Sans', sans-serif;line-height:20px;color:#000;letter-spacing:0.057px;">55425-03</div>
<div style="left:95.50px;top:71px;font:normal 11px 'Liberation Sans', sans-serif;line-height:20px;color:#000;letter-spacing:-0.554px;">51.217-SEGUROS</div>
<div style="left:333.90px;top:71px;font:normal 11px 'Liberation Sans', sans-serif;line-height:20px;color:#000;letter-spacing:-0.100px;">001</div>
<div style="left:366.70px;top:71px;font:normal 11px 'Liberation Sans', sans-serif;line-height:20px;color:#000;">O</div>
<div style="left:388.60px;top:71px;font:normal 11px 'Liberation Sans', sans-serif;line-height:20px;color:#000;letter-spacing:-0.300px;">DM</div>
<div style="left:467.40px;top:71px;font:normal 11px 'Liberation Sans', sans-serif;line-height:20px;color:#000;letter-spacing:-0.040px;">416,66</div>
<div style="left:505.40px;top:71px;font:normal 11px 'Liberation Sans', sans-serif;line-height:20px;color:#000;letter-spacing:0.257px;">11/05/20</div>
<div style="left:566.50px;top:71px;font:normal 11px 'Liberation Sans', sans-serif;line-height:20px;color:#000;letter-spacing:-0.071px;">09/08/20</div>
<div style="left:718.00px;top:71px;font:normal 11px 'Liberation Sans', sans-serif;line-height:20px;color:#000;letter-spacing:-0.744px;">26-BB PGTO</div>
<div style="left:795.30px;top:71px;font:normal 11px 'Liberation Sans', sans-serif;line-height:20px;color:#000;letter-spacing:1.800px;">1 /</div>
<div style="left:825.40px;top:71px;font:normal 11px 'Liberation Sans', sans-serif;line-height:20px;color:#000;letter-spacing:0.180px;">55.425</div>
<div style="left:15.30px;top:96px;font:normal 11px 'Liberation Sans', sans-serif;line-height:20px;color:#000;letter-spacing:0.057px;">55425-04</div>
<div style="left:95.50px;top:95px;font:normal 11px 'Liberation Sans', sans-serif;line-height:20px;color:#000;letter-spacing:-0.554px;">51.217-SEGUROS</div>
<div style="left:333.90px;top:95px;font:normal 11px 'Liberation Sans', sans-serif;line-height:20px;color:#000;letter-spacing:-0.100px;">001</div>
<div style="left:366.70px;top:95px;font:normal 11px 'Liberation Sans', sans-serif;line-height:20px;color:#000;">O</div>
<div style="left:388.60px;top:95px;font:normal 11px 'Liberation Sans', sans-serif;line-height:20px;color:#000;letter-spacing:-0.300px;">DM</div>
<div style="left:467.40px;top:95px;font:normal 11px 'Liberation Sans', sans-serif;line-height:20px;color:#000;letter-spacing:-0.040px;">416,66</div>
<div style="left:505.40px;top:95px;font:normal 11px 'Liberation Sans', sans-serif;line-height:20px;color:#000;letter-spacing:0.257px;">11/05/20</div>
<div style="left:566.50px;top:95px;font:normal 11px 'Liberation Sans', sans-serif;line-height:20px;color:#000;letter-spacing:-0.071px;">08/09/20</div>
<div style="left:718.00px;top:95px;font:normal 11px 'Liberation Sans', sans-serif;line-height:20px;color:#000;letter-spacing:-0.744px;">26-BB PGTO</div>
<div style="left:795.30px;top:95px;font:normal 11px 'Liberation Sans', sans-serif;line-height:20px;color:#000;letter-spacing:1.800px;">1 /</div>
<div style="left:825.40px;top:95px;font:normal 11px 'Liberation Sans', sans-serif;line-height:20px;color:#000;letter-spacing:0.180px;">55.425</div>
<div style="left:15.30px;top:120px;font:normal 11px 'Liberation Sans', sans-serif;line-height:20px;color:#000;letter-spacing:0.057px;">55425-05</div>
<div style="left:95.50px;top:119px;font:normal 11px 'Liberation Sans', sans-serif;line-height:20px;color:#000;letter-spacing:-0.554px;">51.217-SEGUROS</div>
<div style="left:333.90px;top:119px;font:normal 11px 'Liberation Sans', sans-serif;line-height:20px;color:#000;letter-spacing:-0.100px;">001</div>
<div style="left:366.70px;top:119px;font:normal 11px 'Liberation Sans', sans-serif;line-height:20px;color:#000;">O</div>
<div style="left:388.60px;top:119px;font:normal 11px 'Liberation Sans', sans-serif;line-height:20px;color:#000;letter-spacing:-0.300px;">DM</div>
<div style="left:467.40px;top:119px;font:normal 11px 'Liberation Sans', sans-serif;line-height:20px;color:#000;letter-spacing:-0.040px;">416,66</div>
<div style="left:505.40px;top:119px;font:normal 11px 'Liberation Sans', sans-serif;line-height:20px;color:#000;letter-spacing:0.257px;">11/05/20</div>
<div style="left:566.50px;top:119px;font:normal 11px 'Liberation Sans', sans-serif;line-height:20px;color:#000;letter-spacing:-0.071px;">08/10/20</div>
<div style="left:718.00px;top:119px;font:normal 11px 'Liberation Sans', sans-serif;line-height:20px;color:#000;letter-spacing:-0.744px;">26-BB PGTO</div>
<div style="left:795.30px;top:119px;font:normal 11px 'Liberation Sans', sans-serif;line-height:20px;color:#000;letter-spacing:1.800px;">1 /</div>
<div style="left:825.40px;top:119px;font:normal 11px 'Liberation Sans', sans-serif;line-height:20px;color:#000;letter-spacing:0.180px;">55.425</div>
<div style="left:15.30px;top:144px;font:normal 11px 'Liberation Sans', sans-serif;line-height:20px;color:#000;letter-spacing:0.057px;">55425-06</div>
<div style="left:95.50px;top:143px;font:normal 11px 'Liberation Sans', sans-serif;line-height:20px;color:#000;letter-spacing:-0.554px;">51.217-SEGUROS</div>
<div style="left:333.90px;top:143px;font:normal 11px 'Liberation Sans', sans-serif;line-height:20px;color:#000;letter-spacing:-0.100px;">001</div>
<div style="left:366.70px;top:143px;font:normal 11px 'Liberation Sans', sans-serif;line-height:20px;color:#000;">O</div>
<div style="left:388.60px;top:143px;font:normal 11px 'Liberation Sans', sans-serif;line-height:20px;color:#000;letter-spacing:-0.300px;">DM</div>
<div style="left:467.40px;top:143px;font:normal 11px 'Liberation Sans', sans-serif;line-height:20px;color:#000;letter-spacing:-0.040px;">416,66</div>
<div style="left:505.40px;top:143px;font:normal 11px 'Liberation Sans', sans-serif;line-height:20px;color:#000;letter-spacing:0.257px;">11/05/20</div>
<div style="left:566.50px;top:143px;font:normal 11px 'Liberation Sans', sans-serif;line-height:20px;color:#000;letter-spacing:0.071px;">07/11/20</div>
<div style="left:718.00px;top:143px;font:normal 11px 'Liberation Sans', sans-serif;line-height:20px;color:#000;letter-spacing:-0.744px;">26-BB PGTO</div>
<div style="left:795.30px;top:143px;font:normal 11px 'Liberation Sans', sans-serif;line-height:20px;color:#000;letter-spacing:1.800px;">1 /</div>
<div style="left:825.40px;top:143px;font:normal 11px 'Liberation Sans', sans-serif;line-height:20px;color:#000;letter-spacing:0.180px;">55.425</div>
<div style="left:12.80px;top:168px;font:normal 11px 'Liberation Sans', sans-serif;line-height:20px;color:#000;letter-spacing:-0.075px;">123456-01</div>
<div style="left:95.50px;top:167px;font:normal 11px 'Liberation Sans', sans-serif;line-height:20px;color:#000;letter-spacing:-0.554px;">51.217-SEGUROS</div>
<div style="left:333.90px;top:167px;font:normal 11px 'Liberation Sans', sans-serif;line-height:20px;color:#000;letter-spacing:-0.100px;">001</div>
<div style="left:366.70px;top:167px;font:normal 11px 'Liberation Sans', sans-serif;line-height:20px;color:#000;">O</div>
<div style="left:388.60px;top:167px;font:normal 11px 'Liberation Sans', sans-serif;line-height:20px;color:#000;letter-spacing:-0.300px;">DM</div>
<div style="left:467.40px;top:167px;font:normal 11px 'Liberation Sans', sans-serif;line-height:20px;color:#000;letter-spacing:-0.040px;">200,00</div>
<div style="left:506.40px;top:167px;font:normal 11px 'Liberation Sans', sans-serif;line-height:20px;color:#000;letter-spacing:-0.029px;">20/01/20</div>
<div style="left:565.50px;top:167px;font:normal 11px 'Liberation Sans', sans-serif;line-height:20px;color:#000;letter-spacing:0.071px;">19/02/20</div>
<div style="left:692.20px;top:167px;font:normal 11px 'Liberation Sans', sans-serif;line-height:20px;color:#000;letter-spacing:-0.500px;">100</div>
<div style="left:718.00px;top:167px;font:normal 11px 'Liberation Sans', sans-serif;line-height:20px;color:#000;letter-spacing:-0.744px;">26-BB PGTO</div>
<div style="left:795.30px;top:167px;font:normal 11px 'Liberation Sans', sans-serif;line-height:20px;color:#000;letter-spacing:1.800px;">1 /</div>
<div style="left:823.30px;top:167px;font:normal 11px 'Liberation Sans', sans-serif;line-height:20px;color:#000;letter-spacing:-0.167px;">123.456</div>
<div style="left:12.80px;top:192px;font:normal 11px 'Liberation Sans', sans-serif;line-height:20px;color:#000;letter-spacing:-0.075px;">123456-03</div>
<div style="left:95.50px;top:191px;font:normal 11px 'Liberation Sans', sans-serif;line-height:20px;color:#000;letter-spacing:-0.554px;">51.217-SEGUROS</div>
<div style="left:333.90px;top:191px;font:normal 11px 'Liberation Sans', sans-serif;line-height:20px;color:#000;letter-spacing:-0.100px;">001</div>
<div style="left:366.70px;top:191px;font:normal 11px 'Liberation Sans', sans-serif;line-height:20px;color:#000;">O</div>
<div style="left:388.60px;top:191px;font:normal 11px 'Liberation Sans', sans-serif;line-height:20px;color:#000;letter-spacing:-0.300px;">DM</div>
<div style="left:467.40px;top:191px;font:normal 11px 'Liberation Sans', sans-serif;line-height:20px;color:#000;letter-spacing:-0.040px;">200,00</div>
<div style="left:506.40px;top:191px;font:normal 11px 'Liberation Sans', sans-serif;line-height:20px;color:#000;letter-spacing:-0.029px;">20/01/20</div>
<div style="left:565.50px;top:191px;font:normal 11px 'Liberation Sans', sans-serif;line-height:20px;color:#000;letter-spacing:0.071px;">19/04/20</div>
<div style="left:698.30px;top:191px;font:normal 11px 'Liberation Sans', sans-serif;line-height:20px;color:#000;letter-spacing:-1.100px;">40</div>
<div style="left:718.00px;top:191px;font:normal 11px 'Liberation Sans', sans-serif;line-height:20px;color:#000;letter-spacing:-0.744px;">26-BB PGTO</div>
<div style="left:795.30px;top:191px;font:normal 11px 'Liberation Sans', sans-serif;line-height:20px;color:#000;letter-spacing:1.800px;">1 /</div>
<div style="left:823.30px;top:191px;font:normal 11px 'Liberation Sans', sans-serif;line-height:20px;color:#000;letter-spacing:-0.167px;">123.456</div>
<div style="left:12.80px;top:216px;font:normal 11px 'Liberation Sans', sans-serif;line-height:20px;color:#000;letter-spacing:-0.200px;">123456-04</div>
<div style="left:95.50px;top:215px;font:normal 11px 'Liberation Sans', sans-serif;line-height:20px;color:#000;letter-spacing:-0.554px;">51.217-SEGUROS</div>
<div style="left:333.90px;top:215px;font:normal 11px 'Liberation Sans', sans-serif;line-height:20px;color:#000;letter-spacing:-0.100px;">001</div>
<div style="left:366.70px;top:215px;font:normal 11px 'Liberation Sans', sans-serif;line-height:20px;color:#000;">O</div>
<div style="left:388.60px;top:215px;font:normal 11px 'Liberation Sans', sans-serif;line-height:20px;color:#000;letter-spacing:-0.300px;">DM</div>
<div style="left:467.40px;top:215px;font:normal 11px 'Liberation Sans', sans-serif;line-height:20px;color:#000;letter-spacing:-0.040px;">200,00</div>
<div style="left:506.40px;top:215px;font:normal 11px 'Liberation Sans', sans-serif;line-height:20px;color:#000;letter-spacing:-0.029px;">20/01/20</div>
<div style="left:565.50px;top:215px;font:normal 11px 'Liberation Sans', sans-serif;line-height:20px;color:#000;letter-spacing:0.071px;">19/05/20</div>
<div style="left:697.30px;top:215px;font:normal 11px 'Liberation Sans', sans-serif;line-height:20px;color:#000;letter-spacing:-0.100px;">10</div>
<div style="left:718.00px;top:215px;font:normal 11px 'Liberation Sans', sans-serif;line-height:20px;color:#000;letter-spacing:-0.744px;">26-BB PGTO</div>
<div style="left:795.30px;top:215px;font:normal 11px 'Liberation Sans', sans-serif;line-height:20px;color:#000;letter-spacing:1.800px;">1 /</div>
<div style="left:823.30px;top:215px;font:normal 11px 'Liberation Sans', sans-serif;line-height:20px;color:#000;letter-spacing:-0.167px;">123.456</div>
<div style="left:12.80px;top:240px;font:normal 11px 'Liberation Sans', sans-serif;line-height:20px;color:#000;letter-spacing:-0.075px;">123456-05</div>
<div style="left:95.50px;top:239px;font:normal 11px 'Liberation Sans', sans-serif;line-height:20px;color:#000;letter-spacing:-0.554px;">51.217-SEGUROS</div>
<div style="left:333.90px;top:239px;font:normal 11px 'Liberation Sans', sans-serif;line-height:20px;color:#000;letter-spacing:-0.100px;">001</div>
<div style="left:366.70px;top:239px;font:normal 11px 'Liberation Sans', sans-serif;line-height:20px;color:#000;">O</div>
<div style="left:388.60px;top:239px;font:normal 11px 'Liberation Sans', sans-serif;line-height:20px;color:#000;letter-spacing:-0.300px;">DM</div>
<div style="left:467.40px;top:239px;font:normal 11px 'Liberation Sans', sans-serif;line-height:20px;color:#000;letter-spacing:-0.040px;">200,00</div>
<div style="left:506.40px;top:239px;font:normal 11px 'Liberation Sans', sans-serif;line-height:20px;color:#000;letter-spacing:-0.029px;">20/01/20</div>
<div style="left:565.50px;top:239px;font:normal 11px 'Liberation Sans', sans-serif;line-height:20px;color:#000;letter-spacing:0.071px;">18/06/20</div>
<div style="left:718.00px;top:239px;font:normal 11px 'Liberation Sans', sans-serif;line-height:20px;color:#000;letter-spacing:-0.744px;">26-BB PGTO</div>
<div style="left:795.30px;top:239px;font:normal 11px 'Liberation Sans', sans-serif;line-height:20px;color:#000;letter-spacing:1.800px;">1 /</div>
<div style="left:823.30px;top:239px;font:normal 11px 'Liberation Sans', sans-serif;line-height:20px;color:#000;letter-spacing:-0.167px;">123.456</div>
<div style="left:12.80px;top:264px;font:normal 11px 'Liberation Sans', sans-serif;line-height:20px;color:#000;letter-spacing:-0.075px;">123456-06</div>
<div style="left:95.50px;top:263px;font:normal 11px 'Liberation Sans', sans-serif;line-height:20px;color:#000;letter-spacing:-0.554px;">51.217-SEGUROS</div>
<div style="left:333.90px;top:263px;font:normal 11px 'Liberation Sans', sans-serif;line-height:20px;color:#000;letter-spacing:-0.100px;">001</div>
<div style="left:366.70px;top:263px;font:normal 11px 'Liberation Sans', sans-serif;line-height:20px;color:#000;">O</div>
<div style="left:388.60px;top:263px;font:normal 11px 'Liberation Sans', sans-serif;line-height:20px;color:#000;letter-spacing:-0.300px;">DM</div>
<div style="left:467.40px;top:263px;font:normal 11px 'Liberation Sans', sans-serif;line-height:20px;color:#000;letter-spacing:-0.040px;">200,00</div>
<div style="left:506.40px;top:263px;font:normal 11px 'Liberation Sans', sans-serif;line-height:20px;color:#000;letter-spacing:-0.029px;">20/01/20</div>
<div style="left:565.50px;top:263px;font:normal 11px 'Liberation Sans', sans-serif;line-height:20px;color:#000;letter-spacing:0.071px;">18/07/20</div>
<div style="left:718.00px;top:263px;font:normal 11px 'Liberation Sans', sans-serif;line-height:20px;color:#000;letter-spacing:-0.744px;">26-BB PGTO</div>
<div style="left:795.30px;top:263px;font:normal 11px 'Liberation Sans', sans-serif;line-height:20px;color:#000;letter-spacing:1.800px;">1 /</div>
<div style="left:823.30px;top:263px;font:normal 11px 'Liberation Sans', sans-serif;line-height:20px;color:#000;letter-spacing:-0.167px;">123.456</div>
<div style="left:19.20px;top:288px;font:normal 11px 'Liberation Sans', sans-serif;line-height:20px;color:#000;letter-spacing:-0.300px;">2251</div>
<div style="left:94.80px;top:287px;font:normal 11px 'Liberation Sans', sans-serif;line-height:20px;color:#000;letter-spacing:-0.603px;">51.218-FORNECEDOR DE ENERGIA ELETRICA</div>
<div style="left:333.90px;top:287px;font:normal 11px 'Liberation Sans', sans-serif;line-height:20px;color:#000;letter-spacing:-0.100px;">001</div>
<div style="left:366.70px;top:287px;font:normal 11px 'Liberation Sans', sans-serif;line-height:20px;color:#000;">O</div>
<div style="left:388.60px;top:287px;font:normal 11px 'Liberation Sans', sans-serif;line-height:20px;color:#000;letter-spacing:-0.300px;">DM</div>
<div style="left:456.70px;top:287px;font:normal 11px 'Liberation Sans', sans-serif;line-height:20px;color:#000;letter-spacing:0.071px;">9.500,00</div>
<div style="left:506.40px;top:287px;font:normal 11px 'Liberation Sans', sans-serif;line-height:20px;color:#000;letter-spacing:-0.029px;">05/01/20</div>
<div style="left:566.50px;top:287px;font:normal 11px 'Liberation Sans', sans-serif;line-height:20px;color:#000;letter-spacing:-0.071px;">05/01/20</div>
<div style="left:692.20px;top:287px;font:normal 11px 'Liberation Sans', sans-serif;line-height:20px;color:#000;letter-spacing:-0.500px;">145</div>
<div style="left:720.00px;top:287px;font:normal 11px 'Liberation Sans', sans-serif;line-height:20px;color:#000;letter-spacing:-0.200px;">1-CARTEI.</div>
<div style="left:793.00px;top:287px;font:normal 11px 'Liberation Sans', sans-serif;line-height:20px;color:#000;letter-spacing:0.233px;">M1 /</div>
<div style="left:834.40px;top:287px;font:normal 11px 'Liberation Sans', sans-serif;line-height:20px;color:#000;letter-spacing:0.025px;">2.251</div>
</div>
<div style="left:17px;top:444px;width:960px;height:1px;background:#fff;"></div>
<div style="left:17px;top:445px;width:960px;height:16px;background:#f0f0f0;"></div>
<div style="left:119px;top:445px;width:496px;height:15px;background:#cdcdcd;"></div>
<svg style="position:absolute;left:106px;top:448px" width="8" height="9" viewBox="0 0 8 9"><path d="M6.2 1.2 L2.6 4.5 L6.2 7.8" fill="none" stroke="#606060" stroke-width="1.9"/></svg>
<svg style="position:absolute;left:965px;top:448px" width="8" height="9" viewBox="0 0 8 9"><path d="M1.8 1.2 L5.4 4.5 L1.8 7.8" fill="none" stroke="#606060" stroke-width="1.9"/></svg>
<div style="left:980px;top:131px;width:19px;height:82px;background:#f5f7f8;"></div>
<div style="left:981px;top:132px;width:17px;height:80px;border:1px solid #adadad;background:#e1e1e1;"></div>
<div style="left:980px;top:214px;width:19px;height:82px;background:#f5f7f8;"></div>
<div style="left:981px;top:215px;width:17px;height:80px;border:1px solid #adadad;background:#e1e1e1;"></div>
<div style="left:980px;top:296px;width:19px;height:82px;background:#f5f7f8;"></div>
<div style="left:981px;top:297px;width:17px;height:80px;border:1px solid #adadad;background:#e1e1e1;"></div>
<div style="left:980px;top:378px;width:19px;height:83px;background:#f5f7f8;"></div>
<div style="left:981px;top:379px;width:17px;height:81px;border:1px solid #adadad;background:#e1e1e1;"></div>
<div style="left:986px;top:166px;width:7px;height:2px;background:#000"></div>
<div style="left:989px;top:169px;width:1px;height:1px;background:#000"></div>
<div style="left:988px;top:170px;width:3px;height:1px;background:#000"></div>
<div style="left:987px;top:171px;width:5px;height:1px;background:#000"></div>
<div style="left:986px;top:172px;width:7px;height:1px;background:#000"></div>
<div style="left:989px;top:174px;width:1px;height:1px;background:#000"></div>
<div style="left:988px;top:175px;width:3px;height:1px;background:#000"></div>
<div style="left:987px;top:176px;width:5px;height:1px;background:#000"></div>
<div style="left:986px;top:177px;width:7px;height:1px;background:#000"></div>
<div style="left:989px;top:250px;width:1px;height:1px;background:#000"></div>
<div style="left:988px;top:251px;width:3px;height:1px;background:#000"></div>
<div style="left:987px;top:252px;width:5px;height:1px;background:#000"></div>
<div style="left:986px;top:253px;width:7px;height:1px;background:#000"></div>
<div style="left:989px;top:255px;width:1px;height:1px;background:#000"></div>
<div style="left:988px;top:256px;width:3px;height:1px;background:#000"></div>
<div style="left:987px;top:257px;width:5px;height:1px;background:#000"></div>
<div style="left:986px;top:258px;width:7px;height:1px;background:#000"></div>
<div style="left:986px;top:333px;width:7px;height:1px;background:#000"></div>
<div style="left:987px;top:334px;width:5px;height:1px;background:#000"></div>
<div style="left:988px;top:335px;width:3px;height:1px;background:#000"></div>
<div style="left:989px;top:336px;width:1px;height:1px;background:#000"></div>
<div style="left:986px;top:338px;width:7px;height:1px;background:#000"></div>
<div style="left:987px;top:339px;width:5px;height:1px;background:#000"></div>
<div style="left:988px;top:340px;width:3px;height:1px;background:#000"></div>
<div style="left:989px;top:341px;width:1px;height:1px;background:#000"></div>
<div style="left:986px;top:413px;width:7px;height:1px;background:#000"></div>
<div style="left:987px;top:414px;width:5px;height:1px;background:#000"></div>
<div style="left:988px;top:415px;width:3px;height:1px;background:#000"></div>
<div style="left:989px;top:416px;width:1px;height:1px;background:#000"></div>
<div style="left:986px;top:418px;width:7px;height:1px;background:#000"></div>
<div style="left:987px;top:419px;width:5px;height:1px;background:#000"></div>
<div style="left:988px;top:420px;width:3px;height:1px;background:#000"></div>
<div style="left:989px;top:421px;width:1px;height:1px;background:#000"></div>
<div style="left:986px;top:423px;width:7px;height:2px;background:#000"></div>
<div style="left:15.50px;top:459px;font:bold 11px 'Liberation Sans', sans-serif;line-height:20px;color:#000;letter-spacing:0.330px;-webkit-text-stroke:0.2px #000;">Observações</div>
<div style="left:15px;top:477px;width:984px;height:76px;border:1px solid #454545;background:#fffde6;"></div>
<div style="left:982px;top:478px;width:16px;height:74px;background:#f0f0f0;"></div>
<div style="left:997px;top:478px;width:1px;height:74px;background:#fff;"></div>
<svg style="position:absolute;left:985px;top:484px" width="10" height="7" viewBox="0 0 10 7"><path d="M1.3 5.8 L5 2.1 L8.7 5.8" fill="none" stroke="#606060" stroke-width="1.9"/></svg>
<svg style="position:absolute;left:985px;top:541px" width="10" height="7" viewBox="0 0 10 7"><path d="M1.3 1.2 L5 4.9 L8.7 1.2" fill="none" stroke="#606060" stroke-width="1.9"/></svg>
<div style="left:19.10px;top:476px;font:normal 11.67px 'Liberation Mono', monospace;line-height:20px;color:#1a1a1a;letter-spacing:-0.033px;">Fornecedor: SEGUROS</div>
<div style="left:19.10px;top:490px;font:normal 11.67px 'Liberation Mono', monospace;line-height:20px;color:#1a1a1a;letter-spacing:0.014px;">Loc.Cobrança: BANCO PAGAMENTOS</div>
<div style="left:19.10px;top:504px;font:normal 11.67px 'Liberation Mono', monospace;line-height:20px;color:#1a1a1a;letter-spacing:0.017px;">Origem doc.: Notas do financeiro Sigla: 001 Indefinido</div>
<div style="left:16.70px;top:555px;font:bold 11px 'Liberation Sans', sans-serif;line-height:20px;color:#000080;letter-spacing:0.667px;-webkit-text-stroke:0.3px #000080;">Registro alterado em 28/05/2020 às 08:23:17</div>
</body></html>
